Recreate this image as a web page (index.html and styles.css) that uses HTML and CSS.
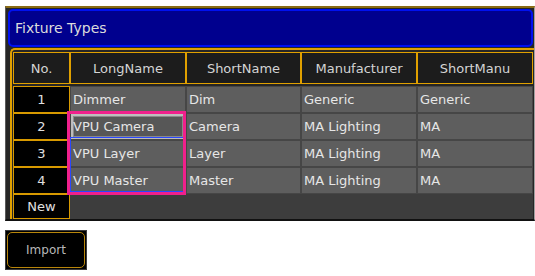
FILE: index.html
```html
<!DOCTYPE html>
<html>

<head>
    <title>Fixture Types</title>
    <link rel="stylesheet" href="styles.css">
</head>

<body>
    <div class="window">
        <div class="title">Fixture Types</div>
        <div class="frame">
            <div class="sheet">
                <div class="head">No.</div>
                <div class="head">LongName</div>
                <div class="head">ShortName</div>
                <div class="head">Manufacturer</div>
                <div class="head">ShortManu</div>

                <div class="num">1</div>
                <div class="cell">Dimmer</div>
                <div class="cell">Dim</div>
                <div class="cell">Generic</div>
                <div class="cell">Generic</div>

                <div class="num">2</div>
                <div class="cell edit">VPU Camera</div>
                <div class="cell">Camera</div>
                <div class="cell">MA Lighting</div>
                <div class="cell">MA</div>

                <div class="num">3</div>
                <div class="cell">VPU Layer</div>
                <div class="cell">Layer</div>
                <div class="cell">MA Lighting</div>
                <div class="cell">MA</div>

                <div class="num">4</div>
                <div class="cell">VPU Master</div>
                <div class="cell">Master</div>
                <div class="cell">MA Lighting</div>
                <div class="cell">MA</div>

                <div class="num">New</div>
                <div class="blank"></div>

                <div class="range"></div>
                <div class="selection"></div>
            </div>
        </div>
    </div>
    <button class="import"><span>Import</span></button>
</body>

</html>
```

FILE: styles.css
```css
body {
    margin: 0;
    background: #fff;
    font-family: "DejaVu Sans", sans-serif;
}

.window {
    margin: 6px 0 0 5px;
    height: 215px;
    box-sizing: border-box;
    background: #262626;
    border-top: 2px solid #8a6b14;
    border-left: 1px solid #5a5a5a;
    border-right: 1px solid #a0a0a0;
    border-bottom: 2px solid #111;
}

.title {
    margin: 1px 1px 0 2px;
    height: 38px;
    box-sizing: border-box;
    background: #00008e;
    border: 2px solid #0010f0;
    border-radius: 5px;
    color: #dcdcdc;
    font-size: 14px;
    line-height: 34px;
    padding-left: 5px;
}

.frame {
    margin: 1px 0 0 4px;
    border-top: 2px solid #e0a000;
    border-left: 2px solid #e0a000;
    border-top-left-radius: 5px;
    padding: 2px 0 0 1px;
}

.sheet {
    position: relative;
    display: grid;
    grid-template-columns: 57px 116px 115px 116px 116px;
    grid-template-rows: 34px repeat(4, 27px) 25px;
    font-size: 13px;
}

.head {
    margin-bottom: 2px;
    background: #1c1c1c;
    border: 1px solid #e0a000;
    color: #d4d4d4;
    display: flex;
    align-items: center;
    justify-content: center;
}

.num {
    background: #000;
    border: 1px solid #d89a00;
    color: #e0e0e0;
    display: flex;
    align-items: center;
    justify-content: center;
}

.cell {
    background: #5e5e5e;
    border: 1px solid #464646;
    color: #e6e6e6;
    display: flex;
    align-items: center;
    padding-left: 2px;
}

.cell.edit {
    box-shadow: inset 0 0 0 2px #bdbdbd, inset 0 0 0 3px #8a8a8a;
    background: #575757;
}

.blank {
    grid-column: span 4;
    background: #3d3d3d;
}

.selection {
    position: absolute;
    left: 54px;
    top: 59px;
    width: 119px;
    height: 84px;
    box-sizing: border-box;
    border: 3px solid #f0208c;
}

.range {
    position: absolute;
    left: 57px;
    top: 85px;
    width: 114px;
    height: 55px;
    box-sizing: border-box;
    border: 1px solid #2a48ff;
}

.import {
    margin: 9px 0 0 5px;
    width: 82px;
    height: 40px;
    padding: 1px;
    background: #000;
    border: 1px solid #3a3a3a;
    display: block;
    font-family: "DejaVu Sans", sans-serif;
    font-size: 12px;
    color: #b8b8b8;
}

.import span {
    display: flex;
    height: 100%;
    align-items: center;
    justify-content: center;
    box-sizing: border-box;
    border: 1px solid #b8860b;
    border-radius: 5px;
}
```
